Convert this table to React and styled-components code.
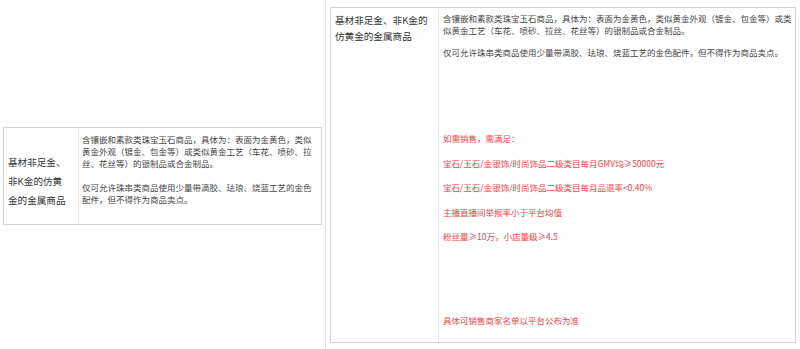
import React from "react";
import styled, { createGlobalStyle } from "styled-components";

const Global = createGlobalStyle`
  html, body { margin: 0; padding: 0; background: #fff; }
  body {
    font-family: "Noto Sans CJK SC", "Noto Sans", sans-serif;
    color: #333;
  }
  * { box-sizing: border-box; }
`;

const Page = styled.div`
  display: flex;
  width: 800px;
  height: 349px;
  background: #fff;
`;

const LeftPane = styled.div`
  width: 326px;
  flex: none;
  display: flex;
  align-items: flex-start;
  padding: 127px 0 0 3px;
  border-right: 1px solid #e3e3e3;
`;

const RightPane = styled.div`
  flex: 1;
  padding: 7px 4px 0 4px;
`;

const Table = styled.div`
  display: grid;
  grid-template-columns: ${(p) => p.$first}px 1fr;
  width: ${(p) => p.$width}px;
  border: 1px solid #d3d3d3;
  background: #fff;
`;

const NameCell = styled.div`
  padding: ${(p) => p.$pad};
  font-size: 9.6px;
  line-height: ${(p) => p.$lh}px;
  color: #333;
`;

const DescCell = styled.div`
  border-left: 1px solid #e6e6e6;
  padding: ${(p) => p.$pad};
  font-size: 8.5px;
  line-height: 12px;
  color: #444;
`;

const Para = styled.p`
  margin: 0 0 ${(p) => p.$gap ?? 12}px;
  color: ${(p) => (p.$red ? "#ef4444" : "inherit")};
  margin-top: ${(p) => p.$top ?? 0}px;
  &:last-child { margin-bottom: 0; }
`;

export default function App() {
  return (
    <>
      <Global />
      <Page>
        <LeftPane>
          <Table $first={74} $width={319}>
            <NameCell $pad="25px 9px 14px 4px" $lh={19}>
              基材非足金、非K金的仿黄金的金属商品
            </NameCell>
            <DescCell $pad="5px 7px 15px 3px">
              <Para>
                含镶嵌和素款类珠宝玉石商品，具体为：表面为金黄色，类似黄金外观（镀金、包金等）或类似黄金工艺（车花、喷砂、拉丝、花丝等）的银制品或合金制品。
              </Para>
              <Para>
                仅可允许珠串类商品使用少量带滴胶、珐琅、烧蓝工艺的金色配件，但不得作为商品卖点。
              </Para>
            </DescCell>
          </Table>
        </LeftPane>
        <RightPane>
          <Table $first={107} $width={466}>
            <NameCell $pad="4px 4px 0 4px" $lh={16}>
              基材非足金、非K金的仿黄金的金属商品
            </NameCell>
            <DescCell $pad="4px 3px 16px 4px">
              <Para $gap={10}>
                含镶嵌和素款类珠宝玉石商品，具体为：表面为金黄色，类似黄金外观（镀金、包金等）或类似黄金工艺（车花、喷砂、拉丝、花丝等）的银制品或合金制品。
              </Para>
              <Para $gap={74}>
                仅可允许珠串类商品使用少量带滴胶、珐琅、烧蓝工艺的金色配件，但不得作为商品卖点。
              </Para>
              <Para $red $gap={12.5}>如需销售，需满足：</Para>
              <Para $red $gap={12.5}>
                宝石/玉石/金银饰/时尚饰品二级类目每月GMV均≥50000元
              </Para>
              <Para $red $gap={12.5}>
                宝石/玉石/金银饰/时尚饰品二级类目每月品退率&lt;0.40%
              </Para>
              <Para $red $gap={12.5}>主播直播间举报率小于平台均值</Para>
              <Para $red $gap={72}>粉丝量≥10万，小店量级≥4.5</Para>
              <Para $red>具体可销售商家名单以平台公布为准</Para>
            </DescCell>
          </Table>
        </RightPane>
      </Page>
    </>
  );
}
